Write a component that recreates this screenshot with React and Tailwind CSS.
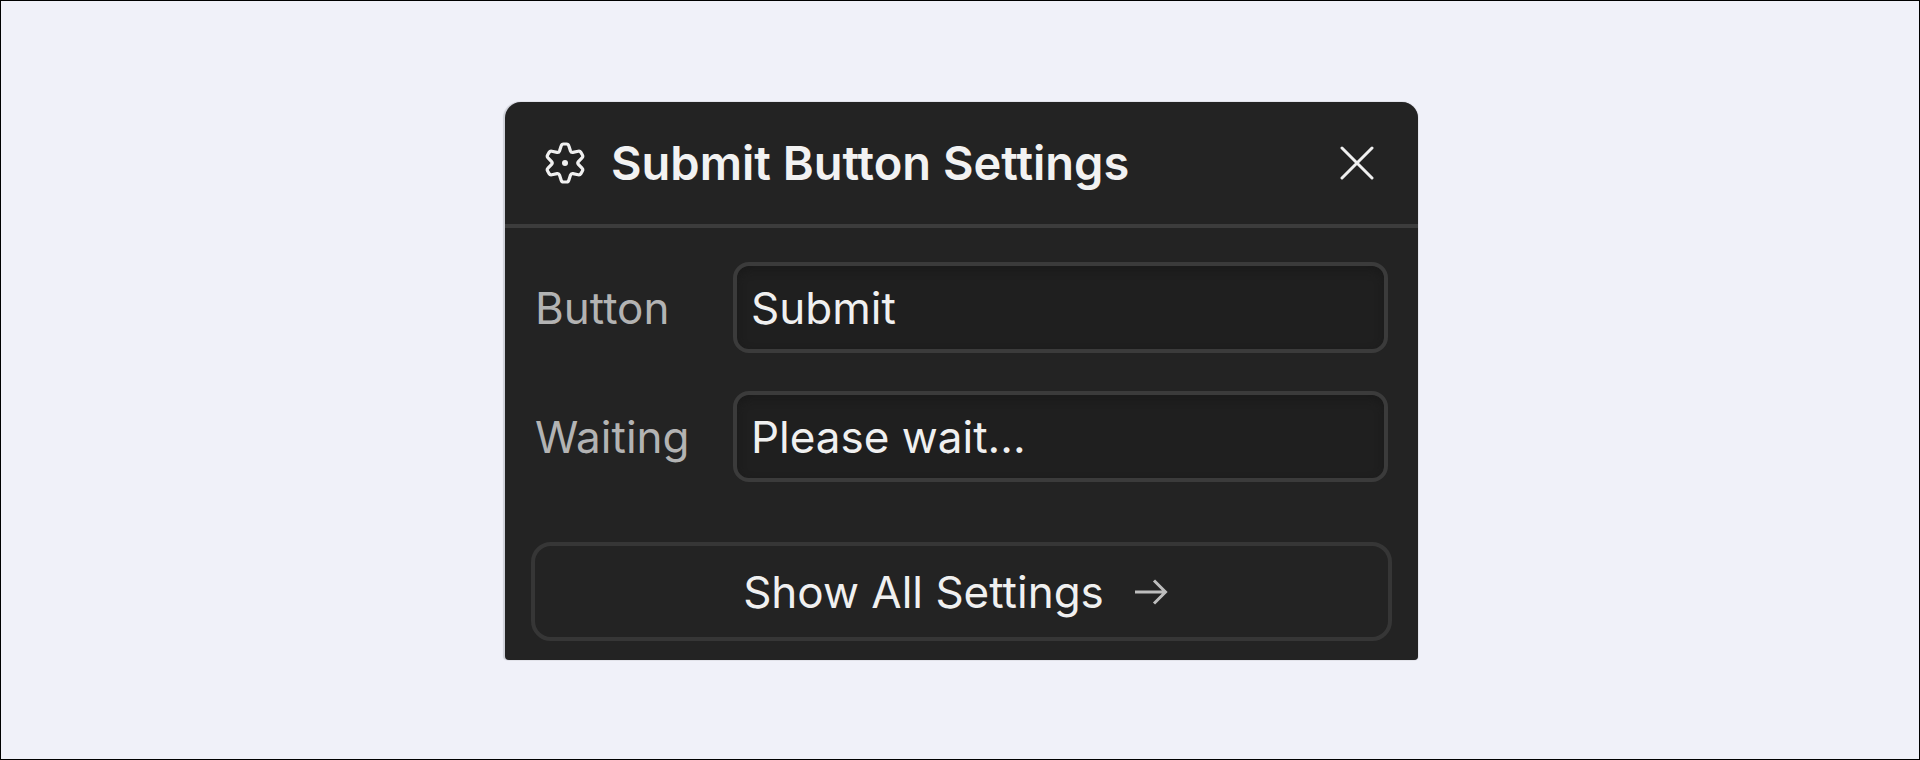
import React, { useState } from "react";

const GearIcon = ({ className }) => (
  <svg
    viewBox="0 0 40 42"
    fill="none"
    stroke="currentColor"
    strokeWidth="3.2"
    strokeLinejoin="round"
    className={className}
    aria-hidden="true"
  >
    <path d="M18.500 2h3q1.800 0 2.300 1.800l1.700 5.200q.6 1.700 2.400 1.400l5.300-1.100q1.800-.4 2.700 1.100l1.500 2.600q.9 1.600-.4 2.900l-3.600 3.800q-1.200 1.300 0 2.600l3.600 3.800q1.300 1.300.4 2.900l-1.500 2.600q-.9 1.500-2.700 1.100l-5.300-1.100q-1.800-.3-2.400 1.400l-1.700 5.200q-.5 1.800-2.300 1.800h-3q-1.800 0-2.300-1.800l-1.700-5.200q-.6-1.700-2.400-1.400l-5.300 1.100q-1.800.4-2.700-1.100l-1.500-2.600q-.9-1.600.4-2.900l3.600-3.800q1.200-1.300 0-2.600l-3.600-3.800q-1.300-1.300-.4-2.900l1.500-2.600q.9-1.500 2.700-1.100l5.300 1.100q1.800.3 2.400-1.400l1.700-5.200q.5-1.800 2.300-1.800z" />
    <circle cx="20" cy="21" r="3" fill="currentColor" stroke="none" />
  </svg>
);

const CloseIcon = ({ className }) => (
  <svg
    viewBox="0 0 34 34"
    fill="none"
    stroke="currentColor"
    strokeWidth="3"
    strokeLinecap="round"
    className={className}
    aria-hidden="true"
  >
    <path d="M2 2l30 30M32 2L2 32" />
  </svg>
);

const ArrowIcon = ({ className }) => (
  <svg
    viewBox="0 0 34 26"
    fill="none"
    stroke="currentColor"
    strokeWidth="3"
    className={className}
    aria-hidden="true"
  >
    <path d="M1 13h30M20 1.500L31.500 13 20 24.500" />
  </svg>
);

const SettingField = ({ id, label, value, onChange }) => (
  <div className="flex items-center">
    <label htmlFor={id} className="w-[198px] shrink-0 text-[44px] leading-none text-[#b3b3b3]">
      {label}
    </label>
    <input
      id={id}
      type="text"
      value={value}
      onChange={(e) => onChange(e.target.value)}
      className="h-[91px] min-w-0 flex-1 rounded-2xl border-4 border-[#3b3b3b] bg-[#1f1f1f] px-[14px] text-[44px] text-[#f0f0f0] shadow-[inset_0_4px_8px_#1a1a1a] outline-none"
    />
  </div>
);

const App = () => {
  const [formData, setFormData] = useState({
    button: "Submit",
    waiting: "Please wait...",
  });

  return (
    <main className="flex min-h-screen items-center justify-center border border-black bg-[#f0f1f9] pt-[2px] font-['Inter',sans-serif]">
      <section className="ml-[3px] w-full max-w-[913px] rounded-t-2xl rounded-b-sm bg-[#232323] shadow-[-2px_0_1px_#cfd1d9,0_0_1px_#77777f]">
        <header className="flex items-center border-b-4 border-[#3c3c3c] py-9 pr-11 pl-10">
          <GearIcon className="h-[42px] w-10 text-[#f0f0f0]" />
          <h1 className="ml-[26px] flex-1 text-[47px] leading-[50px] font-semibold text-[#f2f2f2]">
            Submit Button Settings
          </h1>
          <button type="button" aria-label="Close" className="text-[#f0f0f0]">
            <CloseIcon className="size-[34px]" />
          </button>
        </header>

        <div className="flex flex-col gap-[38px] px-[30px] pt-[34px]">
          <SettingField
            id="button-text"
            label="Button"
            value={formData.button}
            onChange={(button) => setFormData({ ...formData, button })}
          />
          <SettingField
            id="waiting-text"
            label="Waiting"
            value={formData.waiting}
            onChange={(waiting) => setFormData({ ...formData, waiting })}
          />
        </div>

        <div className="px-[26px] pt-[60px] pb-[19px]">
          <button
            type="button"
            className="flex h-[99px] w-full items-center justify-center gap-[30px] rounded-[20px] border-4 border-[#363636] pr-3 text-[44px] text-[#f0f0f0]"
          >
            Show All Settings
            <ArrowIcon className="h-[26px] w-[34px] text-[#bdbdbd]" />
          </button>
        </div>
      </section>
    </main>
  );
};

export default App;
